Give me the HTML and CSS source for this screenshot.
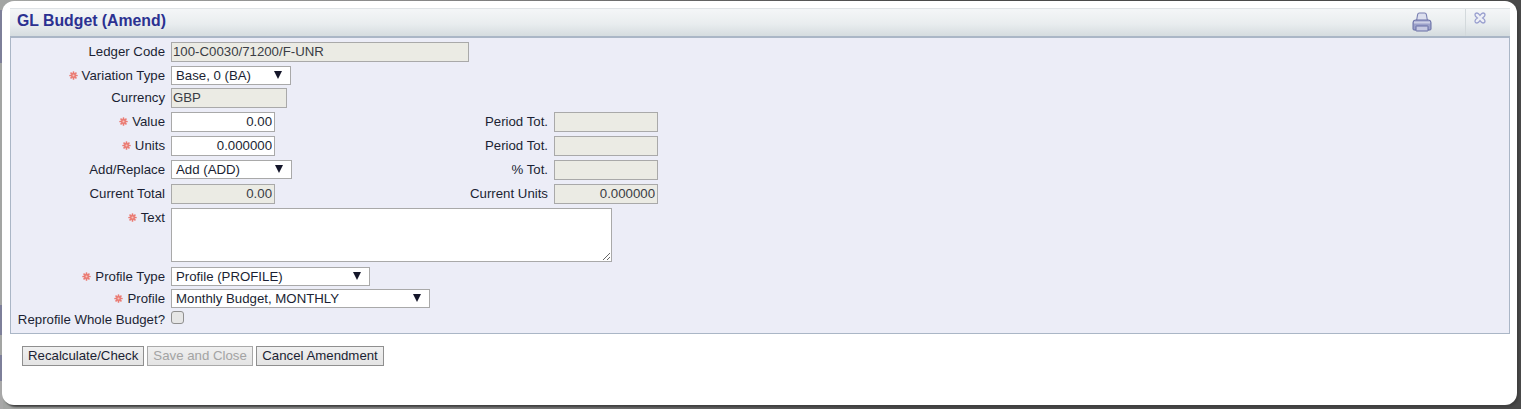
FILE: index.html
```html
<!DOCTYPE html>
<html lang="en">
<head>
<meta charset="utf-8">
<title>GL Budget (Amend)</title>
<link rel="stylesheet" href="styles.css">
</head>
<body>
<div class="dialog">
  <header class="titlebar">
    <h1 class="title">GL Budget (Amend)</h1>
    <span class="print-cell">
      <svg class="print-icon" width="20" height="20" viewBox="0 0 20 20">
        <path d="M4.5 9 L5.6 2.6 Q5.9 1 7.4 1 L12.6 1 Q14.1 1 14.4 2.6 L15.5 9 Z" fill="#dcdfee" stroke="#7a80b2" stroke-width="1.1"/>
        <path d="M1 10.5 Q1 8 3.5 8 L16.5 8 Q19 8 19 10.5 L19 17 Q19 18 18 18 L2 18 Q1 18 1 17 Z" fill="#9ca1ca" stroke="#666ca4" stroke-width="1"/>
        <rect x="2" y="9.5" width="16" height="2" fill="#cdd0e6"/>
        <rect x="4" y="14" width="12" height="5" rx="0.5" fill="#c6c9e2" stroke="#666ca4" stroke-width="1"/>
      </svg>
    </span>
    <span class="close-cell">
      <svg class="close-icon" width="12" height="12" viewBox="0 0 12 12">
        <path d="M3 1 Q4.3 1 6 3.4 Q7.7 1 9 1 Q11 1 11 3 Q11 4.3 8.6 6 Q11 7.7 11 9 Q11 11 9 11 Q7.7 11 6 8.6 Q4.3 11 3 11 Q1 11 1 9 Q1 7.7 3.4 6 Q1 4.3 1 3 Q1 1 3 1 Z" fill="#eef0f6" stroke="#9aa0cf" stroke-width="1.3"/>
      </svg>
    </span>
  </header>

  <form class="panel">
    <div class="row">
      <label class="label">Ledger Code</label>
      <input class="field ro w-ledger" type="text" value="100-C0030/71200/F-UNR" readonly>
    </div>
    <div class="row tight">
      <label class="label"><svg class="req" viewBox="0 0 10 10"><use href="#star"/></svg>Variation Type</label>
      <span class="select-wrap w-variation"><select class="select"><option>Base, 0 (BA)</option></select></span>
    </div>
    <div class="row">
      <label class="label">Currency</label>
      <input class="field ro w-currency" type="text" value="GBP" readonly>
    </div>
    <div class="row">
      <label class="label"><svg class="req" viewBox="0 0 10 10"><use href="#star"/></svg>Value</label>
      <input class="field num w-num" type="text" value="0.00">
      <label class="label2">Period Tot.</label>
      <input class="field ro num w-num" type="text" readonly>
    </div>
    <div class="row">
      <label class="label"><svg class="req" viewBox="0 0 10 10"><use href="#star"/></svg>Units</label>
      <input class="field num w-num" type="text" value="0.000000">
      <label class="label2">Period Tot.</label>
      <input class="field ro num w-num" type="text" readonly>
    </div>
    <div class="row">
      <label class="label">Add/Replace</label>
      <span class="select-wrap w-add"><select class="select"><option>Add (ADD)</option></select></span>
      <label class="label2 after-add">% Tot.</label>
      <input class="field ro num w-num" type="text" readonly>
    </div>
    <div class="row">
      <label class="label">Current Total</label>
      <input class="field ro num w-num" type="text" value="0.00" readonly>
      <label class="label2">Current Units</label>
      <input class="field ro num w-num" type="text" value="0.000000" readonly>
    </div>
    <div class="row loose">
      <label class="label"><svg class="req" viewBox="0 0 10 10"><use href="#star"/></svg>Text</label>
      <textarea class="area"></textarea>
    </div>
    <div class="row tight">
      <label class="label"><svg class="req" viewBox="0 0 10 10"><use href="#star"/></svg>Profile Type</label>
      <span class="select-wrap w-ptype"><select class="select"><option>Profile (PROFILE)</option></select></span>
    </div>
    <div class="row">
      <label class="label"><svg class="req" viewBox="0 0 10 10"><use href="#star"/></svg>Profile</label>
      <span class="select-wrap w-profile"><select class="select"><option>Monthly Budget, MONTHLY</option></select></span>
    </div>
    <div class="row last">
      <label class="label">Reprofile Whole Budget?</label>
      <input class="check" type="checkbox" disabled>
    </div>
  </form>

  <div class="actions">
    <button class="btn" type="button">Recalculate/Check</button>
    <button class="btn" type="button" disabled>Save and Close</button>
    <button class="btn btn-wide" type="button">Cancel Amendment</button>
  </div>
</div>

<svg class="defs" width="0" height="0">
  <symbol id="star" viewBox="0 0 10 10">
    <g stroke="#ea7a72" stroke-width="1.9" stroke-linecap="round">
      <path d="M5 1.2V8.8M1.2 5H8.8M2.3 2.3L7.7 7.7M7.7 2.3L2.3 7.7"/>
    </g>
    <circle cx="5" cy="5" r="1.2" fill="#f6c4c0"/>
  </symbol>
</svg>
</body>
</html>
```
FILE: styles.css
```css
* { box-sizing: border-box; }

html, body {
  margin: 0;
  height: 100%;
}

body {
  width: 1521px;
  height: 409px;
  overflow: hidden;
  padding: 1px 4px 4px 2px;
  font-family: "Liberation Sans", Arial, sans-serif;
  font-size: 13.24px;
  color: #1b1f33;
  background:
    linear-gradient(to bottom,
      #a3a5a3 0, #a3a5a3 10px,
      #7d7f99 10px, #7d7f99 63px,
      #a3a5a3 63px, #a3a5a3 305px,
      #7d7f99 305px, #7d7f99 335px,
      #a3a5a3 335px, #a3a5a3 355px,
      #7d7f99 355px, #7d7f99 381px,
      #a8a8a8 381px) left top / 3px 100% no-repeat,
    linear-gradient(to right, #a3a5a3 0, #8a8a8a 400px, #4a4a4a 900px);
}

.dialog {
  height: 404px;
  padding: 7px 7px 0 8px;
  background: #fff;
  border-radius: 12px;
  box-shadow: 2px 2px 2px #3f3f3f;
}

.titlebar {
  display: flex;
  height: 30px;
  border-top: 1px solid #dfe3e6;
  border-bottom: 2px solid #aab6c6;
  background: linear-gradient(to bottom, #f4f6f7 0, #e9edef 55%, #d5dcdf 100%);
}

.title {
  margin: 0;
  padding: 2px 0 0 7px;
  font-size: 15.8px;
  line-height: 20px;
  font-weight: bold;
  color: #2b3191;
}

.print-cell {
  margin-left: auto;
  padding-top: 3px;
  width: 20px;
  height: 27px;
}

.print-icon { display: block; }

.close-cell {
  margin-left: 33px;
  width: 45px;
  padding: 3px 0 0 8px;
  border-left: 1px solid #d3d9dc;
}

.close-icon { display: block; }

.panel {
  height: 296px;
  padding-top: 2px;
  background: #ecedf7;
  border: 1px solid #aab6c6;
  border-top: 0;
}

.row {
  display: flex;
  align-items: flex-start;
  padding: 2px 0;
}

.row.tight { padding-bottom: 1px; }
.row.loose { padding-bottom: 3px; }
.row.last { padding: 0; }

.label {
  display: flex;
  justify-content: flex-end;
  align-items: center;
  flex: none;
  width: 154px;
  height: 19px;
  margin-right: 6px;
  white-space: nowrap;
}

.label2 {
  flex: none;
  width: 273px;
  height: 19px;
  margin-right: 6px;
  line-height: 19px;
  text-align: right;
  white-space: nowrap;
}

.label2.after-add { width: 256px; }

.req {
  flex: none;
  width: 9px;
  height: 9px;
  margin-right: 4px;
}

.field {
  flex: none;
  height: 20px;
  padding: 0 1px 1px;
  margin: 0;
  font: inherit;
  color: inherit;
  background: #fff;
  border: 1px solid #a9a9a9;
  outline: 0;
}

.field.ro {
  background: #ebebe4;
  color: #3a3d45;
}

.num {
  text-align: right;
  padding-right: 2px;
}

.w-ledger { width: 298px; }
.w-currency { width: 116px; }
.w-num { width: 104px; }
.w-variation { width: 120px; }
.w-add { width: 121px; }
.w-ptype { width: 199px; }
.w-profile { width: 259px; }

.select-wrap {
  position: relative;
  display: block;
  flex: none;
  height: 19px;
}

.select-wrap::after {
  content: "";
  position: absolute;
  top: 5px;
  right: 9px;
  width: 0;
  height: 0;
  border-style: solid;
  border-width: 8px 4.5px 0;
  border-color: #14162a transparent transparent;
  pointer-events: none;
}

.select {
  display: block;
  width: 100%;
  height: 19px;
  margin: 0;
  padding: 0 0 0 4px;
  font: inherit;
  color: inherit;
  background: #fff;
  border: 1px solid #a9a9a9;
  border-radius: 0;
  appearance: none;
  outline: 0;
}

.area {
  display: block;
  flex: none;
  width: 441px;
  height: 54px;
  margin: 0;
  padding: 2px;
  font: inherit;
  background: #fff;
  border: 1px solid #a9a9a9;
  outline: 0;
}

.check {
  flex: none;
  width: 13px;
  height: 13px;
  margin: 1px 0 0;
  appearance: none;
  background: #e6e6e6;
  border: 1px solid #909090;
  border-radius: 3px;
}

.actions {
  display: flex;
  gap: 3px;
  margin: 12px 0 0 12px;
}

.btn {
  height: 20px;
  padding: 0 5px 2px;
  margin: 0;
  font: inherit;
  color: #1b1f33;
  background: linear-gradient(to bottom, #f0f0f0, #e4e4e4);
  border: 1px solid #8f8f8f;
  border-radius: 0;
}

.btn-wide { padding: 0 5.5px 2px; }

.btn:disabled {
  color: #a3a3a3;
  border-color: #a9a9a9;
}

.defs { position: absolute; }
```
